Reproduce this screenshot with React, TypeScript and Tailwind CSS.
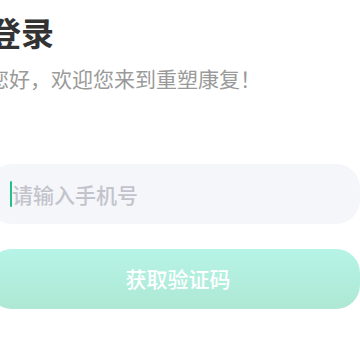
export default function App() {
  return (
    <div
      className="w-full h-[360px] bg-white overflow-hidden"
      style={{ fontFamily: '"Noto Sans CJK SC", "Noto Sans", sans-serif' }}
    >
      <div className="ml-[-12px] w-[372px] pt-[12px]">
        {/* Heading */}
        <h1 className="text-[33px] leading-[41px] font-bold text-[#333333]">登录</h1>
        <p className="mt-[11px] text-[21px] leading-[28px] text-[#9a9a9a]">
          您好，欢迎您来到重塑康复！
        </p>

        {/* Phone input */}
        <div className="mt-[72px] h-[60px] rounded-[24px] bg-[#f5f6fa] flex items-center pl-[22px]">
          <span className="w-[2px] h-[26px] bg-[#1fc08a] rounded-[1px]"></span>
          <span className="text-[21px] font-medium text-[#c3c3cb] leading-none">请输入手机号</span>
        </div>

        {/* Submit */}
        <button className="mt-[25px] w-full h-[60px] rounded-[24px] bg-gradient-to-b from-[#b6f4e7] to-[#aee8d4] text-white text-[21px] font-medium flex items-center justify-center pl-[8px]">
          获取验证码
        </button>
      </div>
    </div>
  );
}
